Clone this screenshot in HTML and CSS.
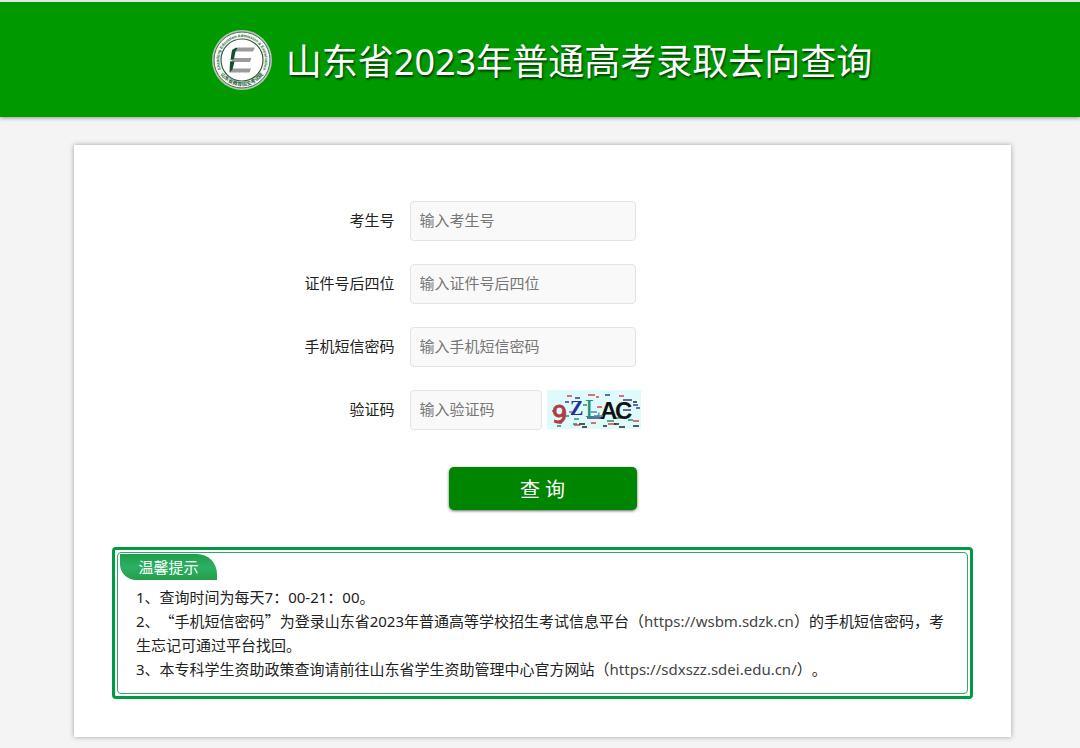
FILE: index.html
```html
<!DOCTYPE html>
<html lang="zh-CN">
<head>
  <meta charset="UTF-8">
  <meta name="viewport" content="width=device-width, initial-scale=1">
  <title>山东省2023年普通高考录取去向查询</title>
  <link rel="stylesheet" href="styles.css">
</head>
<body>
  <header class="header">
    <svg class="logo" viewBox="0 0 60 60" aria-hidden="true">
      <defs>
        <path id="ringTop" d="M10.500 42 A22.900 22.900 0 1 1 49.500 42"/>
        <path id="ringBottom" d="M6.500 40.500 A25.700 25.700 0 0 0 53.500 40.500"/>
      </defs>
      <circle cx="30" cy="30" r="30" fill="#b5c4b5"/>
      <circle cx="30" cy="30" r="28" fill="#f4f7f4" stroke="#4d7456" stroke-width="1"/>
      <circle cx="30" cy="30" r="21" fill="#fff" stroke="#2f5f3c" stroke-width="1.200"/>
      <text class="logo-en"><textPath href="#ringTop" startOffset="50%" text-anchor="middle">Shandong Education Admission &amp; Examination</textPath></text>
      <text class="logo-cn"><textPath href="#ringBottom" startOffset="50%" text-anchor="middle">山东省教育招生考试院</textPath></text>
      <path d="M25 17.500h18l-2 4H23z M20.500 28h19l-1.500 4H19z M19 38.500h20l-1.500 4H17.500z" fill="#999c9a"/>
      <path d="M20 20l4-2.500 1.500 1-2 3-1.500 7.500-3.500 1z M18 31.500h4.500l-2 8-3 3z" fill="#12502b"/>
    </svg>
    <h1 class="title">山东省2023年普通高考录取去向查询</h1>
  </header>

  <main class="main">
    <div class="card">
      <form class="query-form">
        <div class="form-row">
          <label class="form-label" for="ksh">考生号</label>
          <input class="form-input" type="text" id="ksh" placeholder="输入考生号">
        </div>
        <div class="form-row">
          <label class="form-label" for="zjh">证件号后四位</label>
          <input class="form-input" type="text" id="zjh" placeholder="输入证件号后四位">
        </div>
        <div class="form-row">
          <label class="form-label" for="dxmm">手机短信密码</label>
          <input class="form-input" type="password" id="dxmm" placeholder="输入手机短信密码">
        </div>
        <div class="form-row">
          <label class="form-label" for="yzm">验证码</label>
          <div class="captcha-group">
            <input class="form-input captcha-input" type="text" id="yzm" placeholder="输入验证码">
            <svg class="captcha" viewBox="0 0 94 39" role="img" aria-label="验证码图片">
              <rect width="94" height="39" fill="#defafa"/>
              <g fill="none" stroke-width="1.500">
                <path stroke="#d8434b" d="M20 6h5M41 5h7M50 17h5M44 33h5M5 21h4M27 35h6M61 34h8M72 6h5M86 31h6M49 7h3M12 33h3"/>
                <path stroke="#3b3b85" d="M18 12h4M28 8h5M76 10h9M86 15h5M58 5h5M40 28h12M76 20h8M89 18h4"/>
                <path stroke="#2e8f68" d="M15 26h7M27 29h5M60 31h7M68 28h6M81 30h5M36 15h4M10 36h4M26 34h4"/>
                <path stroke="#252525" d="M32 34h6M35 37h5M67 34h5M72 37h6M56 36h4M86 36h6M86 12h4M52 28h5"/>
              </g>
              <text class="cap-nine" x="5" y="33">9</text>
              <text class="cap-z" x="23" y="25">Z</text>
              <text class="cap-l" x="38" y="27">L</text>
              <text class="cap-ac" x="53" y="29">A</text>
              <text class="cap-ac" x="68" y="29">C</text>
              <path d="M44 22h6M47 26h9M22 22h3" fill="none" stroke="#5c83b3" stroke-width="1.500"/>
            </svg>
          </div>
        </div>
        <button class="submit-btn" type="submit">查 询</button>
      </form>

      <section class="notice">
        <div class="notice-inner">
          <h2 class="notice-title">温馨提示</h2>
          <div class="notice-text">
            <p>1、查询时间为每天7：00-21：00。</p>
            <p>2、<span class="quote">“</span>手机短信密码<span class="quote">”</span>为登录山东省2023年普通高等学校招生考试信息平台（<a href="https://wsbm.sdzk.cn">https://wsbm.sdzk.cn</a>）的手机短信密码，考生忘记可通过平台找回。</p>
            <p>3、本专科学生资助政策查询请前往山东省学生资助管理中心官方网站（<a href="https://sdxszz.sdei.edu.cn/">https://sdxszz.sdei.edu.cn/</a>）。</p>
          </div>
        </div>
      </section>
    </div>
  </main>
</body>
</html>
```
FILE: styles.css
```css
* {
  box-sizing: border-box;
}

body {
  margin: 0;
  background-color: #f4f4f4;
  color: #222;
  font-family: "Noto Sans", "Noto Sans CJK SC", sans-serif;
  font-size: 15px;
  text-spacing-trim: space-all;
}

.header {
  display: flex;
  align-items: center;
  justify-content: center;
  gap: 14px;
  height: 117px;
  padding-left: 4px;
  border-top: 2px solid #e5e5e5;
  background-color: #090;
  box-shadow: 0 1px 4px rgba(0, 0, 0, 0.4);
}

.logo {
  width: 60px;
  height: 60px;
}

.logo-en {
  font-family: "Liberation Sans", sans-serif;
  font-size: 4px;
  font-weight: bold;
  fill: #2f5f3c;
}

.logo-cn {
  font-family: "Noto Sans CJK SC", sans-serif;
  font-size: 5px;
  font-weight: bold;
  fill: #2f5f3c;
}

.title {
  margin: 0;
  padding-top: 4px;
  color: #fff;
  font-size: 36px;
  font-weight: normal;
  line-height: 48px;
  text-shadow: 1px 2px 2px rgba(0, 0, 0, 0.6);
}

.main {
  padding: 28px 69px 12px 74px;
}

.card {
  padding: 56px 38px 38px;
  background-color: #fff;
  box-shadow: 0 0 5px rgba(0, 0, 0, 0.35);
}

.query-form {
  display: flex;
  flex-direction: column;
  gap: 23px;
}

.form-row {
  display: grid;
  grid-template-columns: calc(50% - 148px) 1fr;
  align-items: center;
  column-gap: 15px;
}

.form-label {
  padding-bottom: 4px;
  text-align: right;
}

.form-input {
  width: 226px;
  height: 40px;
  padding: 0 9px 2px;
  border: 1px solid #e4e4e4;
  border-radius: 4px;
  background-color: #f9f9f9;
  color: #222;
  font-family: inherit;
  font-size: 15px;
}

.form-input::placeholder {
  color: #777;
}

.captcha-group {
  display: flex;
  gap: 5px;
}

.captcha-input {
  width: 132px;
}

.captcha {
  width: 94px;
  height: 39px;
}

.cap-nine {
  font: 24px "DejaVu Sans", sans-serif;
  fill: #b23b46;
  stroke: #b23b46;
}

.cap-z {
  font: bold 20px "Liberation Serif", serif;
  fill: #25329a;
}

.cap-l {
  font: 26px "Liberation Serif", serif;
  fill: #239173;
}

.cap-ac {
  font: bold 24px "Liberation Sans", sans-serif;
  fill: #111;
}

.submit-btn {
  align-self: center;
  width: 188px;
  height: 43px;
  margin-top: 14px;
  padding-bottom: 2px;
  border: none;
  border-radius: 5px;
  background-color: #008500;
  color: #fff;
  font-family: inherit;
  font-size: 20px;
  box-shadow: 0 1px 3px rgba(0, 0, 0, 0.6);
  cursor: pointer;
}

.notice {
  margin-top: 37px;
  padding: 2px;
  border: 3px solid #094;
  border-radius: 4px;
}

.notice-inner {
  padding: 1px 2px 12px;
  border: 1px solid #33a668;
  border-radius: 4px;
}

.notice-title {
  width: 97px;
  margin: 0;
  border-radius: 0 20px 0 16px;
  background: linear-gradient(#1f9e4c, #2bb062 50%, #239f4a);
  color: #fff;
  font-size: 15px;
  font-weight: normal;
  line-height: 26px;
  text-align: center;
}

.notice-text {
  padding: 5px 16px 0;
}

.notice-text p {
  margin: 0;
  line-height: 24px;
}

.notice-text a {
  color: #444;
  text-decoration: none;
}

.quote {
  font-family: "Noto Sans CJK SC", sans-serif;
}
```
